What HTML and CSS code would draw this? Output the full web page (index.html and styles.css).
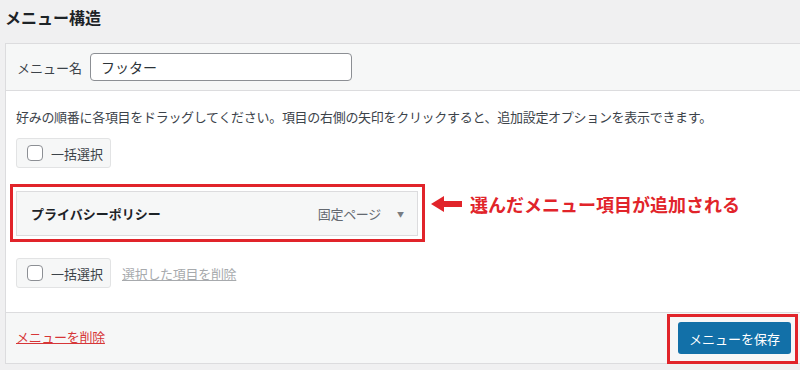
FILE: index.html
```html
<!DOCTYPE html>
<html lang="ja">
<head>
    <meta charset="UTF-8">
    <title>メニュー構造</title>
    <link rel="stylesheet" href="styles.css">
</head>
<body>
    <h2 class="page-title">メニュー構造</h2>

    <div class="menu-panel">
        <!-- Menu name -->
        <div class="panel-header">
            <label class="name-label" for="menuName">メニュー名</label>
            <input class="name-input" id="menuName" type="text" value="フッター">
        </div>

        <!-- Menu items -->
        <div class="panel-body">
            <p class="hint">好みの順番に各項目をドラッグしてください。項目の右側の矢印をクリックすると、追加設定オプションを表示できます。</p>

            <div class="bulk-row">
                <label class="bulk-btn"><span class="check"></span>一括選択</label>
            </div>

            <div class="item-row">
                <div class="mark-box">
                    <div class="menu-item">
                        <span class="item-title">プライバシーポリシー</span>
                        <span class="item-type">固定ページ</span>
                        <span class="item-toggle">▼</span>
                    </div>
                </div>
                <div class="note">
                    <svg class="note-arrow" width="31" height="16" viewBox="0 0 31 16">
                        <polygon points="0,8 13,0 13,5 31,5 31,11 13,11 13,16" fill="#e1242a"/>
                    </svg>
                    <span class="note-text">選んだメニュー項目が追加される</span>
                </div>
            </div>

            <div class="bulk-row">
                <label class="bulk-btn"><span class="check"></span>一括選択</label>
                <a class="remove-selected" href="#">選択した項目を削除</a>
            </div>
        </div>

        <!-- Footer -->
        <div class="panel-footer">
            <a class="delete-link" href="#">メニューを削除</a>
            <div class="mark-box save-mark">
                <button class="save-btn">メニューを保存</button>
            </div>
        </div>
    </div>
</body>
</html>
```

FILE: styles.css
```css
/* Global */
body {
    margin: 0;
    padding-left: 5px;
    background-color: #f0f0f1;
    font-family: "Noto Sans CJK JP", "Noto Sans", sans-serif;
    font-size: 13px;
    color: #3c434a;
    overflow: hidden;
    height: 370px;
}

.page-title {
    margin: 0;
    height: 43px;
    line-height: 34px;
    font-size: 16px;
    font-weight: bold;
    color: #1d2327;
}

/* Panel */
.menu-panel {
    background-color: #fff;
    border: 1px solid #dcdcde;
    border-right: none;
}

.panel-header {
    display: flex;
    align-items: center;
    background-color: #f6f7f7;
    border-bottom: 1px solid #dcdcde;
    padding: 9px 11px;
}

.name-label {
    width: 73px;
    color: #3c434a;
}

.name-input {
    width: 262px;
    height: 28px;
    box-sizing: border-box;
    border: 1px solid #8c8f94;
    border-radius: 4px;
    padding: 0 10px;
    font-family: inherit;
    font-size: 14px;
    color: #2c3338;
}

.panel-body {
    padding: 16px 10px 24px;
}

.hint {
    margin: 0 0 11px;
    line-height: 20px;
    letter-spacing: -0.3px;
}

/* Bulk select */
.bulk-row {
    display: flex;
    align-items: center;
}

.bulk-btn {
    display: flex;
    align-items: center;
    width: 95px;
    height: 30px;
    box-sizing: border-box;
    padding-left: 10px;
    background-color: #f6f7f7;
    border: 1px solid #e2e3e4;
    border-radius: 3px;
    color: #3c434a;
}

.check {
    width: 16px;
    height: 16px;
    box-sizing: border-box;
    border: 1px solid #8c8f94;
    border-radius: 4px;
    background-color: #fff;
    margin-right: 8px;
}

.remove-selected {
    margin-left: 11px;
    color: #a7aaad;
    letter-spacing: -0.3px;
}

/* Item */
.item-row {
    display: flex;
    align-items: flex-start;
    margin: 16px 0;
}

.mark-box {
    border: 3px solid #e1242a;
}

.item-row .mark-box {
    margin-left: -6px;
    padding: 4px 4px 3px 3px;
}

.menu-item {
    display: flex;
    align-items: center;
    width: 402px;
    height: 45px;
    box-sizing: border-box;
    padding: 0 13px 0 14px;
    background-color: #f6f7f7;
    border: 1px solid #dcdcde;
}

.item-title {
    flex: 1;
    font-weight: bold;
    color: #1d2327;
}

.item-type {
    color: #646970;
    letter-spacing: -0.3px;
}

.item-toggle {
    margin-left: 16px;
    font-size: 7px;
    color: #787c82;
}

.note {
    display: flex;
    align-items: center;
    margin: 7px 0 0 6px;
}

.note-arrow {
    display: block;
}

.note-text {
    margin-left: 8px;
    font-size: 18px;
    font-weight: bold;
    color: #e1242a;
}

/* Footer */
.panel-footer {
    display: flex;
    justify-content: space-between;
    align-items: flex-start;
    height: 49px;
    padding: 1px 2px 0 10px;
    background-color: #f6f7f7;
    border-top: 1px solid #dcdcde;
}

.delete-link {
    margin-top: 13px;
    color: #d63638;
    letter-spacing: -0.3px;
}

.save-mark {
    padding: 5px 4px 7px 8px;
}

.save-btn {
    display: block;
    width: 113px;
    height: 32px;
    background-color: #1270a8;
    border: none;
    border-radius: 3px;
    color: #fff;
    font-family: inherit;
    font-size: 13px;
}
```
